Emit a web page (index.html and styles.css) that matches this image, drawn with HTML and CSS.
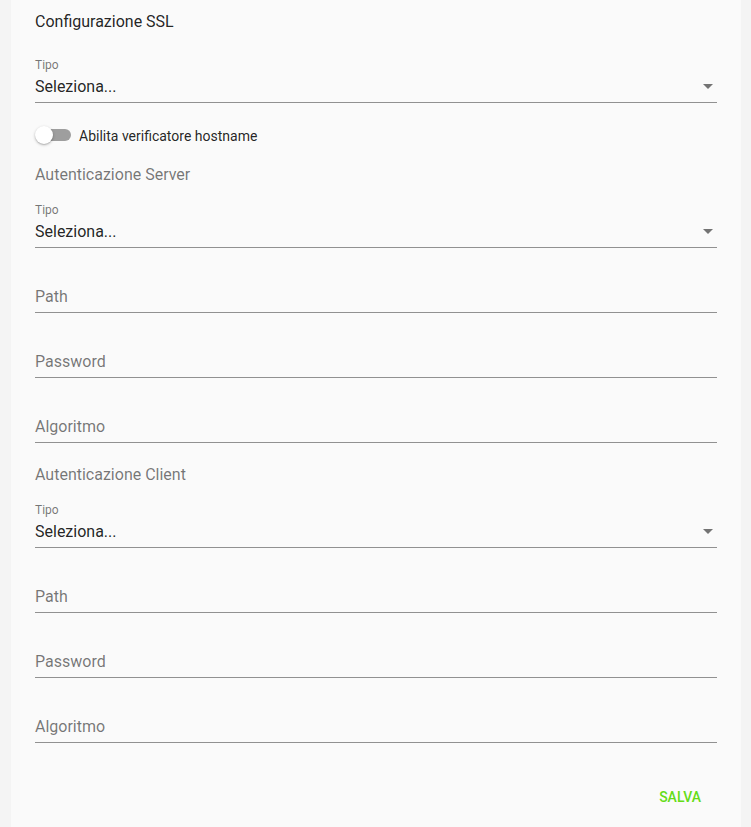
FILE: index.html
```html
<!DOCTYPE html>
<html lang="it">
<head>
<meta charset="utf-8">
<title>Configurazione SSL</title>
<link rel="stylesheet" href="styles.css">
</head>
<body>
<div class="panel">
  <div class="title">Configurazione SSL</div>

  <div class="field first">
    <div class="label">Tipo</div>
    <div class="input value">Seleziona...
      <svg class="arrow" viewBox="0 0 24 24" width="24" height="24"><path d="M7 10l5 5 5-5z"/></svg>
    </div>
  </div>

  <div class="switch-row">
    <span class="switch"><span class="track"></span><span class="knob"></span></span>
    <span class="switch-label">Abilita verificatore hostname</span>
  </div>

  <div class="section">Autenticazione Server</div>

  <div class="field sec-first">
    <div class="label">Tipo</div>
    <div class="input value">Seleziona...
      <svg class="arrow" viewBox="0 0 24 24" width="24" height="24"><path d="M7 10l5 5 5-5z"/></svg>
    </div>
  </div>
  <div class="field"><div class="input placeholder">Path</div></div>
  <div class="field"><div class="input placeholder">Password</div></div>
  <div class="field"><div class="input placeholder">Algoritmo</div></div>

  <div class="section client">Autenticazione Client</div>

  <div class="field sec-first">
    <div class="label">Tipo</div>
    <div class="input value">Seleziona...
      <svg class="arrow" viewBox="0 0 24 24" width="24" height="24"><path d="M7 10l5 5 5-5z"/></svg>
    </div>
  </div>
  <div class="field"><div class="input placeholder">Path</div></div>
  <div class="field"><div class="input placeholder">Password</div></div>
  <div class="field"><div class="input placeholder">Algoritmo</div></div>

  <div class="actions">
    <button class="btn">Salva</button>
  </div>
</div>
</body>
</html>
```

FILE: styles.css
```css
html, body {
  margin: 0;
  padding: 0;
}
body {
  background: #f4f4f4;
  font-family: Roboto, "Liberation Sans", sans-serif;
  color: rgba(0, 0, 0, 0.87);
}
.panel {
  box-sizing: border-box;
  margin-left: 11px;
  width: 730px;
  min-height: 827px;
  background: #fafafa;
  padding: 10px 24px 12px;
}
.title {
  font-size: 16px;
  line-height: 24px;
  color: rgba(0, 0, 0, 0.87);
}
.field {
  position: relative;
  padding-top: 16px;
  margin-top: 16px;
}
.field.first {
  margin-top: 20px;
}
.field.sec-first {
  margin-top: 12px;
}
.label {
  position: absolute;
  top: 0;
  left: 0;
  font-size: 12px;
  line-height: 22px;
  color: rgba(0, 0, 0, 0.54);
}
.input {
  position: relative;
  height: 33px;
  box-sizing: border-box;
  padding: 7px 0 6px;
  font-size: 16px;
  line-height: 19px;
  border-bottom: 1px solid rgba(0, 0, 0, 0.42);
}
.value {
  color: rgba(0, 0, 0, 0.87);
}
.placeholder {
  color: rgba(0, 0, 0, 0.54);
}
.arrow {
  position: absolute;
  right: -3px;
  top: 4px;
  fill: rgba(0, 0, 0, 0.54);
}
.switch-row {
  display: flex;
  align-items: center;
  height: 24px;
  margin-top: 20px;
}
.switch {
  position: relative;
  width: 36px;
  height: 24px;
  flex: none;
}
.track {
  position: absolute;
  left: 5px;
  top: 6px;
  width: 31px;
  height: 12px;
  border-radius: 6px;
  background: #9e9e9e;
}
.knob {
  position: absolute;
  left: 0;
  top: 3px;
  width: 18px;
  height: 18px;
  border-radius: 50%;
  background: #ffffff;
  box-shadow: 0 1px 3px rgba(0, 0, 0, 0.25), 0 1px 1px rgba(0, 0, 0, 0.12);
}
.switch-label {
  margin-left: 8px;
  padding-top: 1px;
  font-size: 14px;
  line-height: 20px;
  color: rgba(0, 0, 0, 0.87);
}
.section {
  margin-top: 16px;
  font-size: 16px;
  line-height: 24px;
  color: rgba(0, 0, 0, 0.54);
}
.section.client {
  margin-top: 20px;
}
.actions {
  display: flex;
  justify-content: flex-end;
  margin-top: 36px;
}
.btn {
  height: 36px;
  min-width: 64px;
  padding: 0 16px;
  border: 0;
  background: transparent;
  font-family: Roboto, "Liberation Sans", sans-serif;
  font-size: 14px;
  font-weight: 500;
  letter-spacing: 0;
  text-transform: uppercase;
  color: #64dd17;
  cursor: pointer;
}
```
